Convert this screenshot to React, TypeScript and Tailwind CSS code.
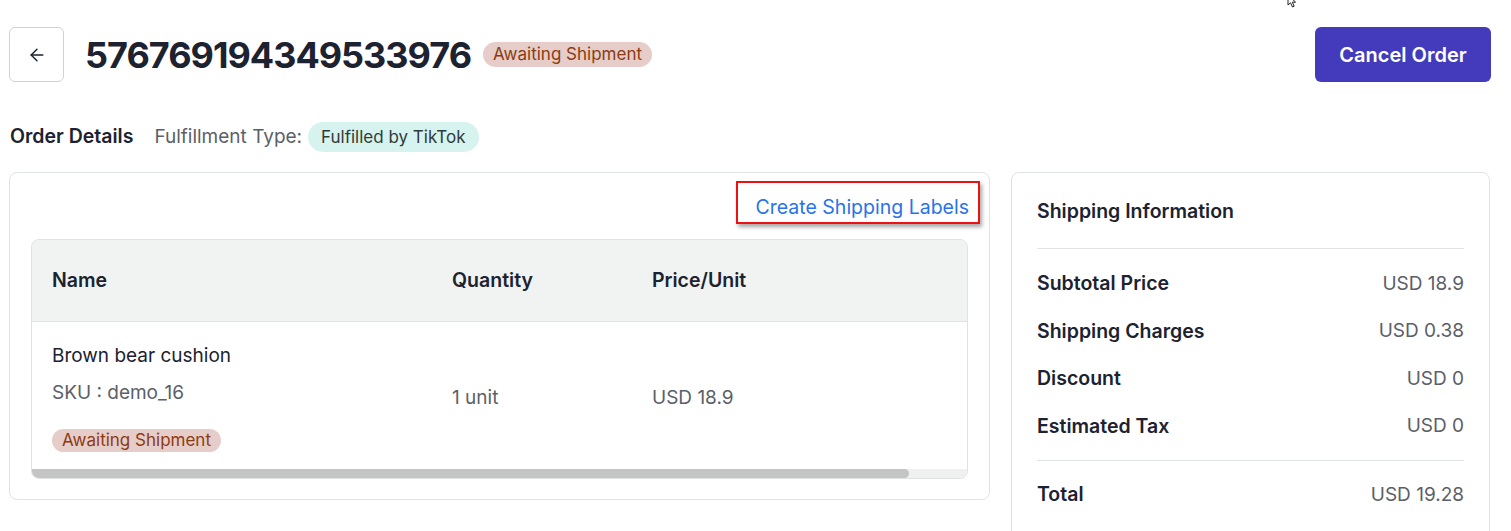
import { ArrowLeft } from "lucide-react";

const summary = [
  { label: "Subtotal Price", value: "USD 18.9" },
  { label: "Shipping Charges", value: "USD 0.38" },
  { label: "Discount", value: "USD 0" },
  { label: "Estimated Tax", value: "USD 0" },
];

function StatusBadge({ className = "" }: { className?: string }) {
  return (
    <span
      className={`inline-flex items-center rounded-full bg-[#e6cdc9] px-[10px] text-[17px] leading-[25px] text-[#8b3b12] ${className}`}
    >
      Awaiting Shipment
    </span>
  );
}

export default function App() {
  return (
    <div className="relative min-h-[531px] bg-white pl-[9px] pr-[20px] pt-[27px] font-['Inter',sans-serif] text-[#1c2230]">
      {/* mouse pointer left in the capture */}
      <svg className="absolute left-[1287px] top-[-6px]" width="12" height="14" viewBox="0 0 12 14">
        <path d="M1 1 L1 11 L3.5 8.8 L5.5 13 L7.2 12.2 L5.3 8.2 L8.6 8.2 Z" fill="#fff" stroke="#222" strokeWidth="1" />
      </svg>

      <header className="flex items-center justify-between">
        <div className="flex items-center">
          <button className="flex h-[55px] w-[55px] items-center justify-center rounded-[6px] border border-[#cfd2d6] bg-white text-[#1c2230]">
            <ArrowLeft size={20} strokeWidth={1.75} />
          </button>
          <h1 className="ml-[21px] text-[36px] font-bold leading-none tracking-[-1px]">576769194349533976</h1>
          <StatusBadge className="ml-[12px]" />
        </div>
        <button className="h-[55px] w-[176px] rounded-[6px] bg-[#433bbb] text-[20px] font-semibold text-white">
          Cancel Order
        </button>
      </header>

      <div className="mt-[40px] flex h-[30px] items-center text-[19.5px]">
        <span className="ml-px font-semibold">Order Details</span>
        <span className="ml-[21px] text-[19px] text-[#5b6068]">Fulfillment Type:</span>
        <span className="ml-[6px] rounded-full bg-[#d7f3ef] px-[13px] text-[17px] leading-[30px] text-[#2f3b3a]">
          Fulfilled by TikTok
        </span>
      </div>

      <div className="mt-[20px] flex items-start gap-[21px]">
        {/* order items */}
        <section className="h-[328px] w-[981px] rounded-[8px] border border-[#e1e2e4] px-[21px] pt-[8px]">
          <div className="flex justify-end">
            <a className="-mr-[12px] flex h-[43px] items-center border-2 border-[#ee1111] pl-[18px] pr-[9px] pt-[10px] text-[19.5px] text-[#2873ea] shadow-[2px_3px_4px_rgba(0,0,0,0.35)]">
              Create Shipping Labels
            </a>
          </div>

          <div className="mt-[15px] overflow-hidden rounded-[8px] border border-[#e1e2e4]">
            <div className="grid h-[82px] grid-cols-[400px_200px_1fr] items-center border-b border-[#e1e2e4] bg-[#f1f2f2] pl-[20px] text-[19.5px] font-semibold">
              <span>Name</span>
              <span>Quantity</span>
              <span>Price/Unit</span>
            </div>
            <div className="grid h-[147px] grid-cols-[400px_200px_1fr] items-center pl-[20px] pt-[4px] text-[19px]">
              <div className="flex flex-col items-start">
                <span className="leading-[24px]">Brown bear cushion</span>
                <span className="mt-[13px] leading-[24px] text-[#5b6068]">SKU : demo_16</span>
                <StatusBadge className="mt-[24px] h-[23px]" />
              </div>
              <span className="pt-[2px] text-[#5b6068]">1 unit</span>
              <span className="pt-[2px] text-[#5b6068]">USD 18.9</span>
            </div>
            <div className="h-[9px] bg-[#f0f0f0]">
              <div className="h-full w-[877px] rounded-r-full bg-[#c4c4c4]" />
            </div>
          </div>
        </section>

        {/* shipping summary */}
        <aside className="h-[380px] w-[479px] rounded-[8px] border border-[#e1e2e4] px-[25px] pt-[25px]">
          <h2 className="text-[19.5px] font-semibold leading-[27px]">Shipping Information</h2>
          <div className="mt-[23px] border-t border-[#e1e2e4]" />
          <div className="flex flex-col pt-[11px]">
            {summary.map((row) => (
              <div key={row.label} className="flex h-[47.5px] items-center justify-between text-[19px]">
                <span className="text-[19.5px] font-semibold">{row.label}</span>
                <span className="text-[#5b6068]">{row.value}</span>
              </div>
            ))}
          </div>
          <div className="mt-[10px] border-t border-[#e1e2e4]" />
          <div className="flex h-[68px] items-center justify-between text-[19px]">
            <span className="text-[19.5px] font-semibold">Total</span>
            <span className="text-[#5b6068]">USD 19.28</span>
          </div>
        </aside>
      </div>
    </div>
  );
}
